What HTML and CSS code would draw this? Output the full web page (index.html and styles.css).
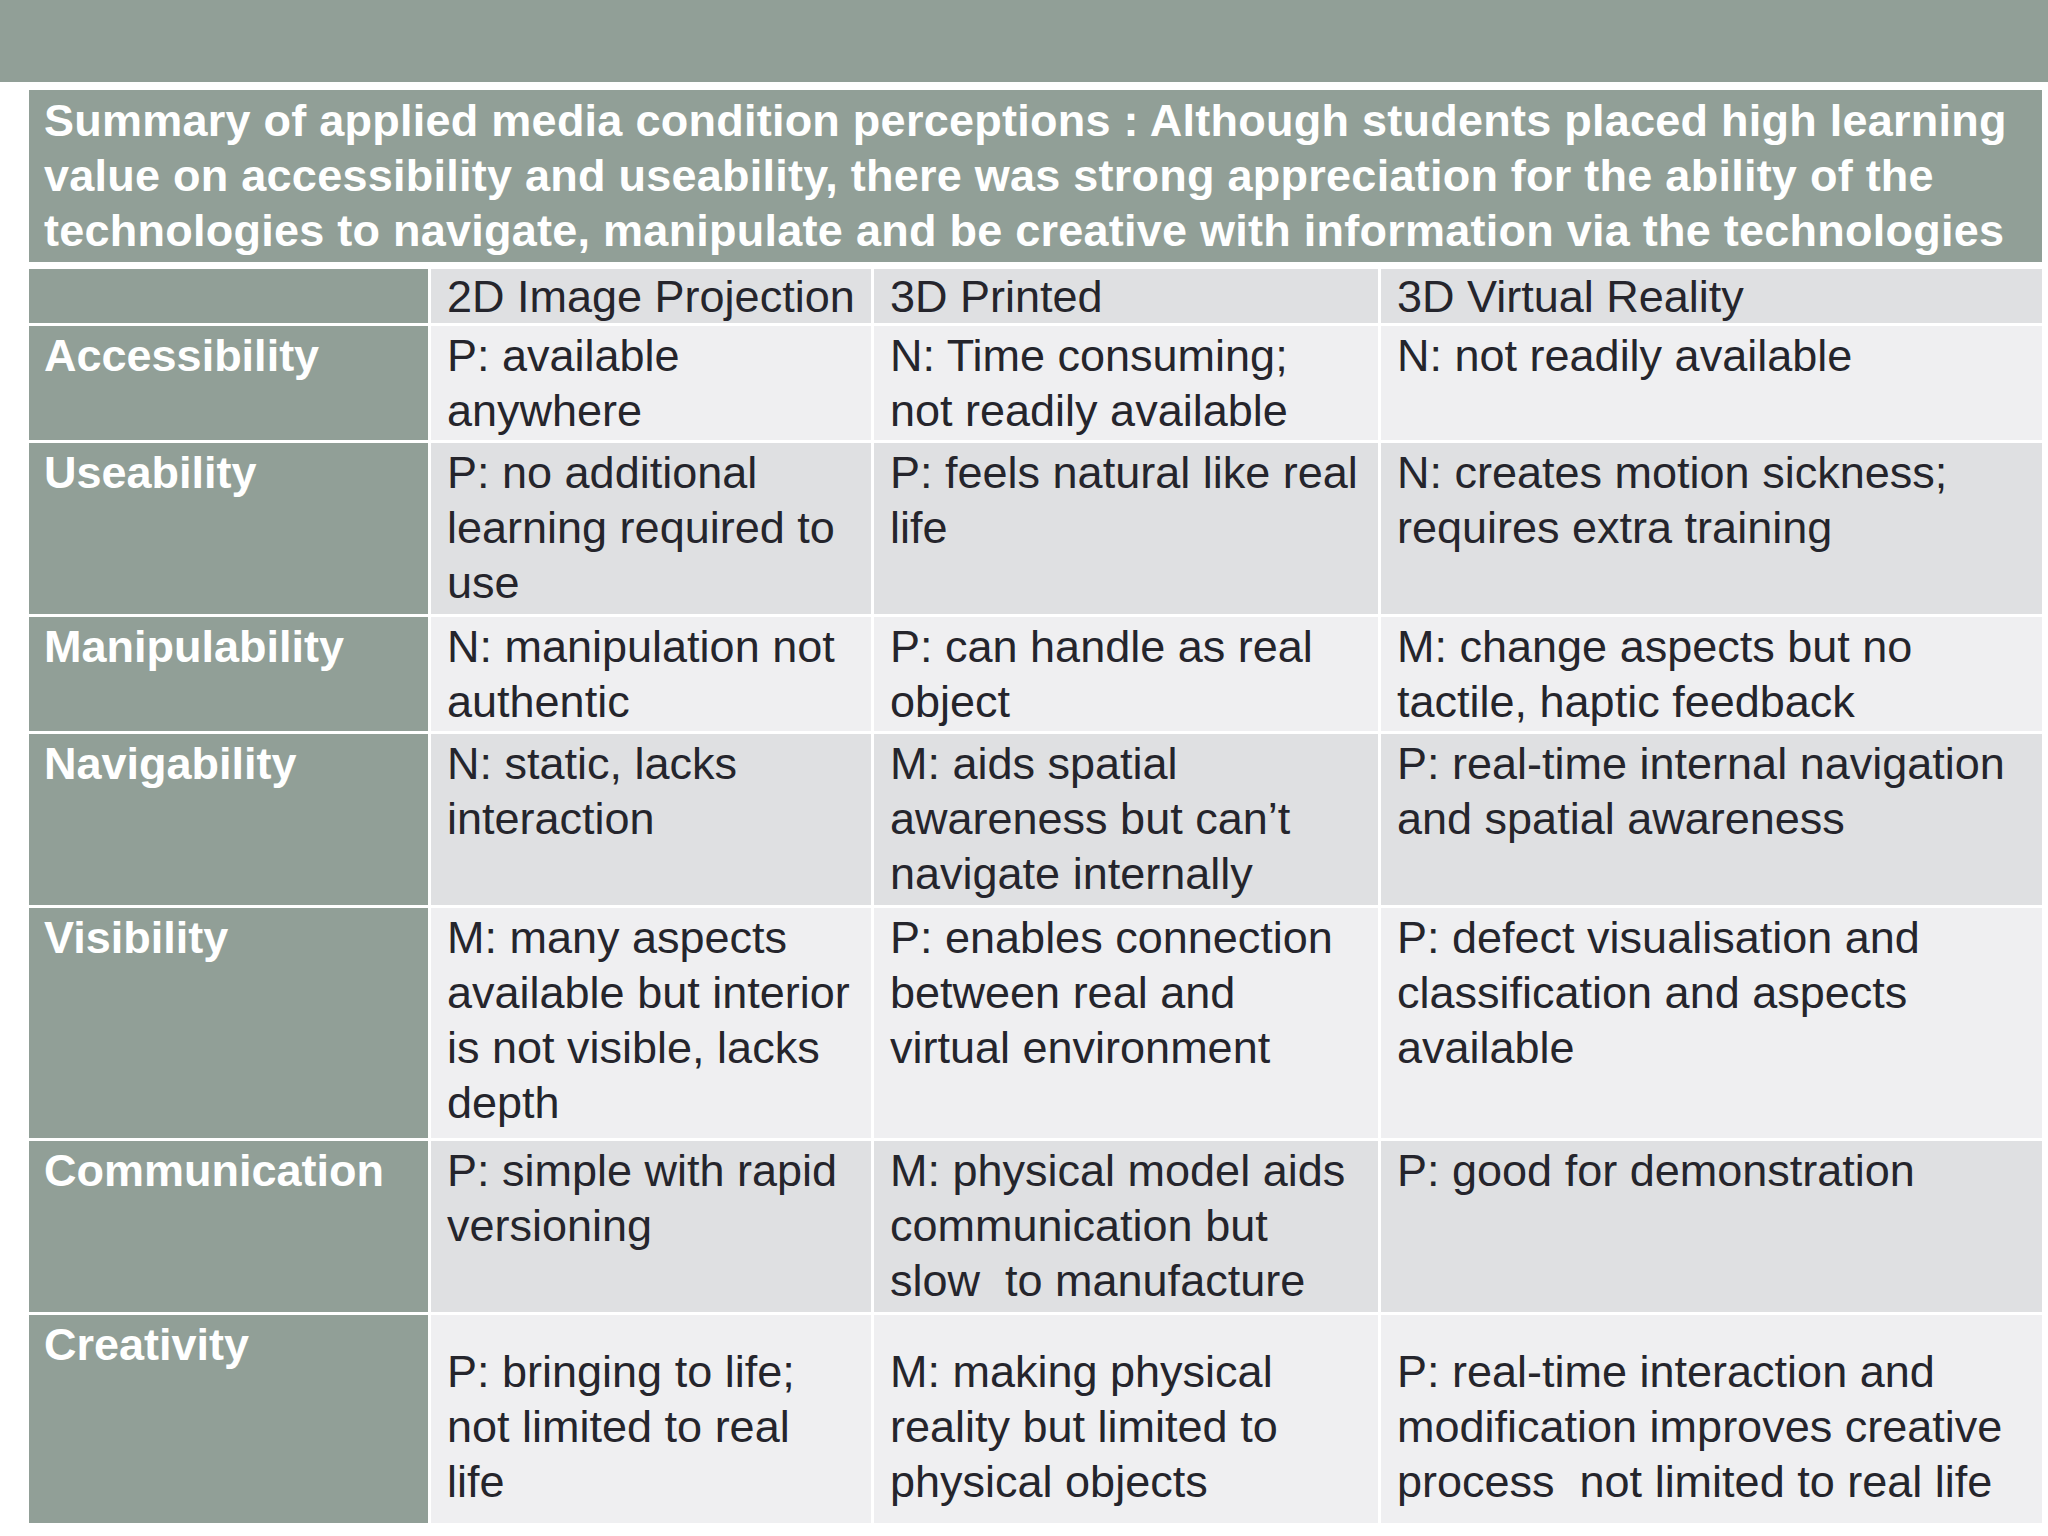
FILE: index.html
```html
<!DOCTYPE html>
<html lang="en">
<head>
<meta charset="utf-8">
<title>Summary of applied media condition perceptions</title>
<link rel="stylesheet" href="styles.css">
</head>
<body>
<div class="topbar"></div>
<main class="content">
  <div class="title">Summary of applied media condition perceptions : Although students placed high learning value on accessibility and useability, there was strong appreciation for the ability of the technologies to navigate, manipulate and be creative with information via the technologies</div>
  <div class="grid">
    <div class="label"></div>
    <div class="cell head">2D Image Projection</div>
    <div class="cell head">3D Printed</div>
    <div class="cell head">3D Virtual Reality</div>

    <div class="label">Accessibility</div>
    <div class="cell light">P: available anywhere</div>
    <div class="cell light">N: Time consuming; not readily available</div>
    <div class="cell light">N: not readily available</div>

    <div class="label">Useability</div>
    <div class="cell dark">P: no additional learning required to use</div>
    <div class="cell dark">P: feels natural like real life</div>
    <div class="cell dark">N: creates motion sickness; requires extra training</div>

    <div class="label">Manipulability</div>
    <div class="cell light">N: manipulation not authentic</div>
    <div class="cell light">P: can handle as real object</div>
    <div class="cell light">M: change aspects but no tactile, haptic feedback</div>

    <div class="label">Navigability</div>
    <div class="cell dark">N: static, lacks interaction</div>
    <div class="cell dark">M: aids spatial awareness but can’t navigate internally</div>
    <div class="cell dark">P: real-time internal navigation and spatial awareness</div>

    <div class="label">Visibility</div>
    <div class="cell light">M: many aspects available but interior is not visible, lacks depth</div>
    <div class="cell light">P: enables connection between real and virtual environment</div>
    <div class="cell light">P: defect visualisation and classification and aspects available</div>

    <div class="label">Communication</div>
    <div class="cell dark">P: simple with rapid versioning</div>
    <div class="cell dark">M: physical model aids communication but slow&nbsp; to manufacture</div>
    <div class="cell dark">P: good for demonstration</div>

    <div class="label">Creativity</div>
    <div class="cell light middle">P: bringing to life; not limited to real life</div>
    <div class="cell light middle">M: making physical reality but limited to physical objects</div>
    <div class="cell light middle">P: real-time interaction and modification improves creative process&nbsp; not limited to real life</div>
  </div>
</main>
</body>
</html>
```
FILE: styles.css
```css
html, body {
  margin: 0;
  padding: 0;
  background: #ffffff;
}

body {
  font-family: "Liberation Sans", Arial, sans-serif;
  font-size: 45px;
  line-height: 55px;
  color: #25252c;
}

.topbar {
  height: 82px;
  background: #919f97;
}

.content {
  padding: 8px 6px 0 29px;
}

.title {
  height: 172px;
  box-sizing: border-box;
  padding: 3px 6px 0 15px;
  background: #919f97;
  color: #ffffff;
  font-weight: bold;
  letter-spacing: 0.25px;
}

.grid {
  margin-top: 7px;
  display: grid;
  grid-template-columns: 399px 440px 504px 1fr;
  grid-template-rows: 54px 114px 171px 114px 171px 230px 171px 208px;
  gap: 3px;
}

.label {
  background: #919f97;
  color: #ffffff;
  font-weight: bold;
  padding: 2px 10px 0 15px;
}

.cell {
  padding: 2px 16px 0 16px;
}

.head {
  background: #dfe0e2;
  padding-top: 0;
}

.light {
  background: #efeff1;
}

.dark {
  background: #dfe0e2;
}

.middle {
  display: flex;
  align-items: center;
  padding-top: 14px;
}
```
